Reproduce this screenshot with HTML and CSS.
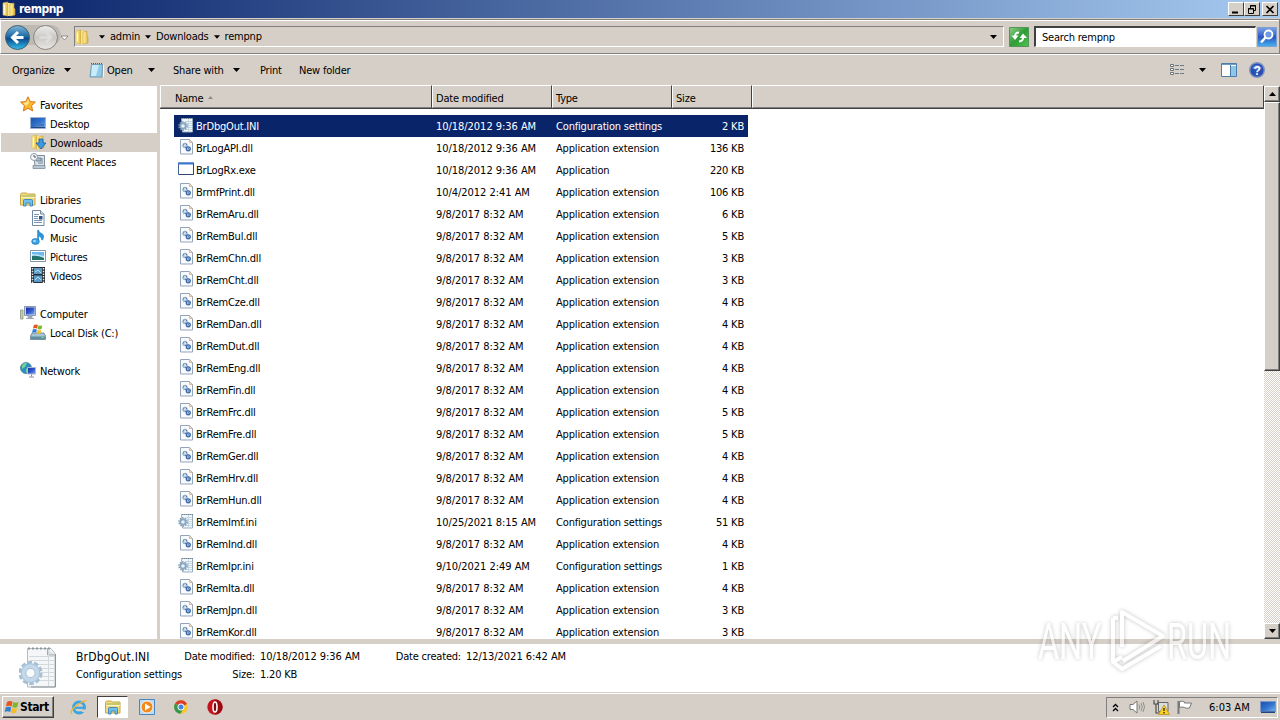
FILE: index.html
```html
<!DOCTYPE html>
<html lang="en">
<head>
  <meta charset="UTF-8">
  <title>rempnp</title>
  <link rel="stylesheet" href="styles.css">
</head>
<body>

  <!-- Shared icons -->
  <svg class="defs" width="0" height="0">
    <defs>
      <linearGradient id="g-folder" x1="0" x2="1"><stop offset="0" stop-color="#fff3ae"/><stop offset=".5" stop-color="#f3d873"/><stop offset="1" stop-color="#d9ae3c"/></linearGradient>
      <linearGradient id="g-screen" x1="0" y1="0" x2="1" y2="1"><stop offset="0" stop-color="#1a2a9c"/><stop offset=".5" stop-color="#2f55d0"/><stop offset="1" stop-color="#7aa5ee"/></linearGradient>
      <linearGradient id="g-desk" x1="0" y1="0" x2="1" y2="1"><stop offset="0" stop-color="#1d4fa8"/><stop offset=".5" stop-color="#2f72cc"/><stop offset="1" stop-color="#76b2ea"/></linearGradient>
      <linearGradient id="g-blue" x1="0" y1="0" x2="0" y2="1"><stop offset="0" stop-color="#7fb6d8"/><stop offset=".45" stop-color="#1d6ca8"/><stop offset=".55" stop-color="#0a4c8c"/><stop offset="1" stop-color="#35c0ee"/></linearGradient>
      <linearGradient id="g-grey" x1="0" y1="0" x2="0" y2="1"><stop offset="0" stop-color="#eeeeec"/><stop offset=".5" stop-color="#c9c8c4"/><stop offset="1" stop-color="#e9e8e5"/></linearGradient>
      <linearGradient id="g-green" x1="0" y1="0" x2="1" y2="1"><stop offset="0" stop-color="#8fd08a"/><stop offset=".5" stop-color="#2f9c35"/><stop offset="1" stop-color="#4fc64c"/></linearGradient>
      <linearGradient id="g-search" x1="0" y1="0" x2="0" y2="1"><stop offset="0" stop-color="#7fa3e6"/><stop offset=".5" stop-color="#2a56c4"/><stop offset="1" stop-color="#45b4ee"/></linearGradient>
      <symbol id="folder" viewBox="0 0 16 16">
        <path d="M2 2l5-1v14l-5-1z" fill="url(#g-folder)" stroke="#d8b850" stroke-width=".6"/>
        <path d="M7 2h4v13H7z" fill="#f8e48e"/>
        <path d="M9 3l4-1v5l1 1v6l-5 1z" fill="url(#g-folder)" stroke="#c9a33a" stroke-width=".6"/>
        <path d="M3.500 4v8" stroke="#fffbe0"/>
      </symbol>
      <symbol id="libs" viewBox="0 0 16 16">
        <path d="M.5 3.500l1-1.500h5l1 1h7.500v11H.5z" fill="#f3dc7c" stroke="#c8a647"/>
        <path d="M1.500 5h13" stroke="#8fb864"/>
        <path d="M1 6.500h14" stroke="#fff3b8"/>
        <path d="M3.500 15V9.500q0-1 1-1h7q1 0 1 1V15H10v-3H6v3z" fill="#6fc1ec" stroke="#3582bb" stroke-width=".9"/>
      </symbol>
      <symbol id="dll" viewBox="0 0 16 16">
        <path d="M2.500 .5h9l3 3v11.500h-12z" fill="#f8fafd" stroke="#94a5ba"/>
        <path d="M11.500.5v3h3z" fill="#ecdcc8" stroke="#c4ac8c" stroke-width=".7"/>
        <circle cx="7" cy="6.500" r="2" fill="#cfe2f6" stroke="#54779f" stroke-width="1.300" stroke-dasharray="1.100 .5"/>
        <circle cx="10.300" cy="9.800" r="2" fill="#a9cbee" stroke="#3d69a5" stroke-width="1.300"/>
        <circle cx="10.300" cy="9.800" r=".6" fill="#315c98"/>
      </symbol>
      <symbol id="ini" viewBox="0 0 16 16">
        <path d="M3.500 1.500H14.500v13.500H4.500z" fill="#f4f8fb" stroke="#9aacbc"/>
        <path d="M4 1.500h11" stroke="#6f8291" stroke-dasharray="1 1"/>
        <path d="M7 4.500h7M8 6.500h6M9 8.500h5M9 10.500h5M7 12.500h7M10.500 2v13" stroke="#b9cfdf" stroke-width=".8"/>
        <circle cx="5" cy="9" r="4" fill="none" stroke="#7c98b0" stroke-width="1.500" stroke-dasharray="1.500 1"/>
        <circle cx="5" cy="9" r="2.600" fill="#e8f2f8" stroke="#86a6c2" stroke-width="1.600"/>
      </symbol>
      <symbol id="exe" viewBox="0 0 16 16">
        <path d="M.5 2h15v11.500H.5z" fill="#fff" stroke="#426392"/>
        <path d="M0 2.500h16" stroke="#3a78cf" stroke-width="2"/>
        <path d="M1 13.500h14.500v-11" stroke="#2d4470" fill="none"/>
      </symbol>
      <symbol id="flag" viewBox="0 0 16 16">
        <path d="M3 3q3-2 5.500-.3L7.500 7.500Q5 6 2 7.500z" fill="#e8561f"/>
        <path d="M9.300 3q2.500 1.500 5.200 0L13.300 8q-2.500 1.300-5 0z" fill="#7cb82c"/>
        <path d="M1.700 8.600q3-1.500 5.500 0L6.200 13Q3.500 11.700.7 13z" fill="#2f7fd2"/>
        <path d="M8 9q2.500 1.500 5.100 0L12 13.600q-2.500 1.500-5 0z" fill="#f7bd22"/>
      </symbol>
      <symbol id="down" viewBox="0 0 7 4"><path d="M0 0h7L3.500 4z"/></symbol>
    </defs>
  </svg>

  <div class="titlebar">
    <svg class="i16"><use href="#folder"/></svg>
    <span class="title">rempnp</span>
    <div class="win-btn"><svg width="10" height="9"><path d="M1 7.500h6" stroke="#000" stroke-width="2"/></svg></div>
    <div class="win-btn"><svg width="10" height="9"><path d="M3.500 3V.5h5v5H7M3 1h6M1.500 3.500h5v5h-5zM1 4h6" fill="none" stroke="#000"/></svg></div>
    <div class="win-btn close"><svg width="10" height="9"><path d="M1.500 1l7 7M8.500 1l-7 7" stroke="#000" stroke-width="1.700"/></svg></div>
  </div>

  <div class="navbar">
    <svg class="travel" width="66" height="28">
      <path d="M13 2h34q8 1 9 10-1 9-9 10H13z" fill="#bdbab4"/>
      <circle cx="12.500" cy="14.500" r="12" fill="url(#g-blue)" stroke="#47606f"/>
      <path d="M18.500 14.500H8.500M13 9l-5.500 5.500L13 20" fill="none" stroke="#fff" stroke-width="3"/>
      <circle cx="40.500" cy="14.500" r="12" fill="url(#g-grey)" stroke="#858583"/>
      <path d="M34.500 14.500h10M41 9.500l5 5-5 5" fill="none" stroke="#dedddb" stroke-width="2.500"/>
      <path d="M56 13h7l-3.500 4z" fill="#fff" stroke="#777" stroke-width=".8"/>
    </svg>
    <div class="address">
      <svg class="i16"><use href="#folder"/></svg>
      <svg class="crumb"><use href="#down"/></svg><span>admin</span>
      <svg class="crumb"><use href="#down"/></svg><span>Downloads</span>
      <svg class="crumb"><use href="#down"/></svg><span>rempnp</span>
      <svg class="arr history"><use href="#down"/></svg>
    </div>
    <svg class="refresh" width="20" height="20">
      <path d="M.5.5h19v19H.5z" fill="url(#g-green)" stroke="#52945a"/>
      <path d="M10 5.500q-4 0-3.800 3.500M14 8v3q0 3-4 3.500" fill="none" stroke="#fff" stroke-width="2"/>
      <path d="M2.500 8.500h7L6 13zM10.500 11H18l-4-4.500z" fill="#fff"/>
    </svg>
    <div class="search">Search rempnp</div>
    <svg class="go" width="20" height="20">
      <path d="M.5.5h19v19H.5z" fill="url(#g-search)" stroke="#7e9fd0"/>
      <circle cx="11.500" cy="7.500" r="4" fill="#6c98e6" stroke="#fff" stroke-width="1.800"/>
      <path d="M8.500 10.500L4 15.500" stroke="#fff" stroke-width="2.500"/>
    </svg>
  </div>

  <div class="toolbar">
    <span class="t-organize">Organize</span><svg class="arr"><use href="#down"/></svg>
    <svg class="note" width="16" height="16">
      <path d="M2.500 2.500h11l-.5 12.500H1z" fill="#8fcbe8" stroke="#6e9cb5"/>
      <path d="M3 3h7L7 14H2z" fill="#c8ecf8"/>
      <path d="M2 1.500h12" stroke="#49606d" stroke-dasharray="1 1"/>
      <path d="M14.500 3v12" stroke="#f5f5ef"/>
    </svg>
    <span class="t-open">Open</span><svg class="arr"><use href="#down"/></svg>
    <span class="t-share">Share with</span><svg class="arr"><use href="#down"/></svg>
    <span class="t-print">Print</span>
    <span class="t-new">New folder</span>
    <svg class="views" width="16" height="12">
      <path d="M.5.5h3v2h-3zM.5 4.500h3v2h-3zM.5 8.500h3v2h-3z" fill="#fff" stroke="#69747d"/>
      <path d="M5 1.500h10M5 5.500h10M5 9.500h10" stroke="#6c7b88" stroke-dasharray="4 1"/>
    </svg>
    <svg class="arr"><use href="#down"/></svg>
    <svg class="pane" width="16" height="14">
      <path d="M.5.500h15v13H.5z" fill="#fff" stroke="#4c7da8"/>
      <path d="M1 1.500h14" stroke="#6e9ec5"/>
      <path d="M10 3h5v10h-5z" fill="#8fc6ea"/><path d="M9.500 2v11" stroke="#4c7da8"/>
    </svg>
    <svg class="help" width="16" height="16">
      <circle cx="8" cy="8" r="7.300" fill="#2850b4" stroke="#8293bb" stroke-width="1.400"/>
      <path d="M3 6q5-6 10 0-5 3-10 0z" fill="#6488d8"/>
      <text x="8" y="12.500" text-anchor="middle">?</text>
    </svg>
  </div>

  <div class="content">
    <div class="sidebar">
      <div class="node root">
        <svg class="i16"><path d="M8 .8l2.200 4.700 5.200.6-3.800 3.600 1 5.200L8 12.300l-4.600 2.600 1-5.200L.6 6.100l5.200-.6z" fill="#fcb62d" stroke="#d9771c"/><path d="M8 3l1.300 3.500L6 10 3 7l3.500-.7z" fill="#ffe58c"/></svg>
        <span>Favorites</span>
      </div>
      <div class="node">
        <svg class="i16"><path d="M.5 2.500h15v11H.5z" fill="url(#g-desk)" stroke="#9cb1d5"/><path d="M1 12.500h14" stroke="#27477c"/><path d="M8 9h6v2H8z" fill="#4a72b2"/></svg>
        <span>Desktop</span>
      </div>
      <div class="node active">
        <svg class="i16"><use href="#folder"/><path d="M9 5h4v4h3l-5 6-5-6h3z" fill="#3d9ae0" stroke="#1a5da5" stroke-width=".8"/></svg>
        <span>Downloads</span>
      </div>
      <div class="node">
        <svg class="i16"><path d="M4 2.500h10.500v11H5z" fill="#dbe4eb" stroke="#7e8c99"/><path d="M6 5h5v3H6zM8 10h5M12 5v4" fill="#a8bccb" stroke="#718696"/><path d="M3 12.500h12v3H3z" fill="#b9c7d2" stroke="#7e8c99" stroke-width=".8"/><circle cx="4" cy="4" r="3.500" fill="#f4f8fa" stroke="#8d9daa"/><path d="M4 2v2h2" fill="none" stroke="#556"/></svg>
        <span>Recent Places</span>
      </div>

      <div class="node root group">
        <svg class="i16"><use href="#libs"/></svg>
        <span>Libraries</span>
      </div>
      <div class="node">
        <svg class="i16"><path d="M2.500.5h8l3.500 3.500v11.500H2.500z" fill="#fff" stroke="#7089a5"/><path d="M10.500.5V4H14" fill="#d6e3f0" stroke="#7089a5"/><path d="M4 4.500h5M4 6.500h4M4 8.500h4M4 10.500h8M4 12.500h8" stroke="#7895b4"/><path d="M9 6h3.500v3.500H9z" fill="#31588a"/></svg>
        <span>Documents</span>
      </div>
      <div class="node">
        <svg class="i16"><path d="M8 12.500V1q.5 3 3.500 4 3 2 .5 6 .5-3-3-4.500" fill="#2e93d8" stroke="#2e93d8" stroke-width="1.600"/><ellipse cx="5.500" cy="12.500" rx="3.800" ry="2.900" fill="#3ca5e6" stroke="#1e70b6" stroke-width=".7"/><ellipse cx="4.500" cy="12" rx="1.500" ry="1" fill="#aee1fa"/></svg>
        <span>Music</span>
      </div>
      <div class="node">
        <svg class="i16"><path d="M.5 2.500h15v11H.5z" fill="#fff" stroke="#8195ab"/><path d="M2 4h12v8H2z" fill="#6bbaf0"/><path d="M2 6q6 0 12 2v4H2z" fill="#b9e3f4"/><path d="M2 8q5-1 12 2v2H2z" fill="#23746a"/></svg>
        <span>Pictures</span>
      </div>
      <div class="node">
        <svg class="i16"><path d="M1 0h14v16H1z" fill="#292c30"/><path d="M2.500 1v15M13.500 1v15" stroke="#e5e8ea" stroke-width="1.500" stroke-dasharray="1.500 1.200"/><path d="M4 1h8v6H4zM4 8.500h8V15H4z" fill="#5b9ccb"/><path d="M5 5l3-2 3 3M5 13l3-3 3 3" stroke="#b8e0f2" fill="none"/></svg>
        <span>Videos</span>
      </div>

      <div class="node root group">
        <svg class="i16"><path d="M.5 5h2.500v9H.5z" fill="#c6d0a9" stroke="#8a9681" stroke-width=".8"/><path d="M4.500 1.500h11v9h-11z" fill="#cfd5e2" stroke="#8996b2"/><path d="M6 2.500h8.500v7H6z" fill="url(#g-screen)"/><path d="M8 11h4v1.500H8zM6 13.500h8" fill="#9aa7bd" stroke="#9aa7bd"/></svg>
        <span>Computer</span>
      </div>
      <div class="node">
        <svg class="i16"><path d="M2 9h12l1.500 3v3.500H.5V12z" fill="#a7c6d3" stroke="#63808e" stroke-width=".8"/><path d="M1 12.500h14v2.500H1z" fill="#5c8ea2"/><path d="M11.500 13.500h2" stroke="#8df05e"/><use href="#flag" x="1" y="-1" width="13" height="12"/></svg>
        <span>Local Disk (C:)</span>
      </div>

      <div class="node root group">
        <svg class="i16"><circle cx="6" cy="6" r="5.500" fill="#2b8fc0" stroke="#457f94" stroke-width=".8"/><path d="M2 3q3-3 5-2L5 5 2 7zM6 7l3-2v4l-3 2z" fill="#72d09c"/><path d="M7.500 5.500h8V12h-8z" fill="url(#g-screen)" stroke="#aab9d8"/><path d="M11.500 12.500v2M9 15h5" stroke="#7b8ead"/></svg>
        <span>Network</span>
      </div>
    </div>

    <div class="files">
      <div class="head">
        <div class="c-name">Name <svg width="5" height="3"><path d="M0 3h5L2.500 0z" fill="#8b8985"/></svg></div>
        <div class="c-date">Date modified</div>
        <div class="c-type">Type</div>
        <div class="c-size">Size</div>
        <div class="c-rest"></div>
      </div>
      <div class="rows">
        <div class="row selected"><svg class="fi"><use href="#ini"/></svg><span class="name">BrDbgOut.INI</span><span class="date">10/18/2012 9:36 AM</span><span class="type">Configuration settings</span><span class="size">2 KB</span></div>
        <div class="row"><svg class="fi"><use href="#dll"/></svg><span class="name">BrLogAPI.dll</span><span class="date">10/18/2012 9:36 AM</span><span class="type">Application extension</span><span class="size">136 KB</span></div>
        <div class="row"><svg class="fi"><use href="#exe"/></svg><span class="name">BrLogRx.exe</span><span class="date">10/18/2012 9:36 AM</span><span class="type">Application</span><span class="size">220 KB</span></div>
        <div class="row"><svg class="fi"><use href="#dll"/></svg><span class="name">BrmfPrint.dll</span><span class="date">10/4/2012 2:41 AM</span><span class="type">Application extension</span><span class="size">106 KB</span></div>
        <div class="row"><svg class="fi"><use href="#dll"/></svg><span class="name">BrRemAru.dll</span><span class="date">9/8/2017 8:32 AM</span><span class="type">Application extension</span><span class="size">6 KB</span></div>
        <div class="row"><svg class="fi"><use href="#dll"/></svg><span class="name">BrRemBul.dll</span><span class="date">9/8/2017 8:32 AM</span><span class="type">Application extension</span><span class="size">5 KB</span></div>
        <div class="row"><svg class="fi"><use href="#dll"/></svg><span class="name">BrRemChn.dll</span><span class="date">9/8/2017 8:32 AM</span><span class="type">Application extension</span><span class="size">3 KB</span></div>
        <div class="row"><svg class="fi"><use href="#dll"/></svg><span class="name">BrRemCht.dll</span><span class="date">9/8/2017 8:32 AM</span><span class="type">Application extension</span><span class="size">3 KB</span></div>
        <div class="row"><svg class="fi"><use href="#dll"/></svg><span class="name">BrRemCze.dll</span><span class="date">9/8/2017 8:32 AM</span><span class="type">Application extension</span><span class="size">4 KB</span></div>
        <div class="row"><svg class="fi"><use href="#dll"/></svg><span class="name">BrRemDan.dll</span><span class="date">9/8/2017 8:32 AM</span><span class="type">Application extension</span><span class="size">4 KB</span></div>
        <div class="row"><svg class="fi"><use href="#dll"/></svg><span class="name">BrRemDut.dll</span><span class="date">9/8/2017 8:32 AM</span><span class="type">Application extension</span><span class="size">4 KB</span></div>
        <div class="row"><svg class="fi"><use href="#dll"/></svg><span class="name">BrRemEng.dll</span><span class="date">9/8/2017 8:32 AM</span><span class="type">Application extension</span><span class="size">4 KB</span></div>
        <div class="row"><svg class="fi"><use href="#dll"/></svg><span class="name">BrRemFin.dll</span><span class="date">9/8/2017 8:32 AM</span><span class="type">Application extension</span><span class="size">4 KB</span></div>
        <div class="row"><svg class="fi"><use href="#dll"/></svg><span class="name">BrRemFrc.dll</span><span class="date">9/8/2017 8:32 AM</span><span class="type">Application extension</span><span class="size">5 KB</span></div>
        <div class="row"><svg class="fi"><use href="#dll"/></svg><span class="name">BrRemFre.dll</span><span class="date">9/8/2017 8:32 AM</span><span class="type">Application extension</span><span class="size">5 KB</span></div>
        <div class="row"><svg class="fi"><use href="#dll"/></svg><span class="name">BrRemGer.dll</span><span class="date">9/8/2017 8:32 AM</span><span class="type">Application extension</span><span class="size">4 KB</span></div>
        <div class="row"><svg class="fi"><use href="#dll"/></svg><span class="name">BrRemHrv.dll</span><span class="date">9/8/2017 8:32 AM</span><span class="type">Application extension</span><span class="size">4 KB</span></div>
        <div class="row"><svg class="fi"><use href="#dll"/></svg><span class="name">BrRemHun.dll</span><span class="date">9/8/2017 8:32 AM</span><span class="type">Application extension</span><span class="size">4 KB</span></div>
        <div class="row"><svg class="fi"><use href="#ini"/></svg><span class="name">BrRemImf.ini</span><span class="date">10/25/2021 8:15 AM</span><span class="type">Configuration settings</span><span class="size">51 KB</span></div>
        <div class="row"><svg class="fi"><use href="#dll"/></svg><span class="name">BrRemInd.dll</span><span class="date">9/8/2017 8:32 AM</span><span class="type">Application extension</span><span class="size">4 KB</span></div>
        <div class="row"><svg class="fi"><use href="#ini"/></svg><span class="name">BrRemIpr.ini</span><span class="date">9/10/2021 2:49 AM</span><span class="type">Configuration settings</span><span class="size">1 KB</span></div>
        <div class="row"><svg class="fi"><use href="#dll"/></svg><span class="name">BrRemIta.dll</span><span class="date">9/8/2017 8:32 AM</span><span class="type">Application extension</span><span class="size">4 KB</span></div>
        <div class="row"><svg class="fi"><use href="#dll"/></svg><span class="name">BrRemJpn.dll</span><span class="date">9/8/2017 8:32 AM</span><span class="type">Application extension</span><span class="size">3 KB</span></div>
        <div class="row"><svg class="fi"><use href="#dll"/></svg><span class="name">BrRemKor.dll</span><span class="date">9/8/2017 8:32 AM</span><span class="type">Application extension</span><span class="size">3 KB</span></div>
      </div>
    </div>

    <div class="scrollbar">
      <div class="sb-btn"><svg width="7" height="4"><path d="M0 4h7L3.500 0z"/></svg></div>
      <div class="thumb"></div>
      <div class="track"></div>
      <div class="sb-btn"><svg width="7" height="4"><path d="M0 0h7L3.500 4z"/></svg></div>
    </div>
  </div>

  <div class="details">
    <svg class="big-icon" width="40" height="44">
      <path d="M8.500 2.500H32l4 5V41H8.500z" fill="#f4f6f7" stroke="#b5bcc1"/>
      <path d="M36.500 8v33H12" fill="none" stroke="#8f979d"/>
      <path d="M9 2.500h22" stroke="#8d969b" stroke-width="2" stroke-dasharray="2 2"/>
      <path d="M28.500 3v6h7.500" fill="#dde2e5" stroke="#a3abb0"/>
      <path d="M10 10.500h26M10 14.500h26M10 18.500h26M10 22.500h26M10 26.500h26M10 30.500h26M10 34.500h26M29.500 4v36" stroke="#d3dade"/>
      <circle cx="11.500" cy="27" r="10.500" fill="none" stroke="#a5bed2" stroke-width="3" stroke-dasharray="4.400 2.200"/>
      <circle cx="11.500" cy="27" r="7.300" fill="#f0f5f8" stroke="#c3d9ea" stroke-width="5"/>
      <circle cx="11.500" cy="27" r="9.300" fill="none" stroke="#9db8d0" stroke-width=".7"/>
      <circle cx="11.500" cy="27" r="4.600" fill="#f8fbfc" stroke="#94b0c8" stroke-width=".8"/>
    </svg>
    <div class="info who"><span class="file">BrDbgOut.INI</span><span class="type">Configuration settings</span></div>
    <div class="info keys"><span>Date modified:</span><span>Size:</span></div>
    <div class="info vals"><span class="date">10/18/2012 9:36 AM</span><span>1.20 KB</span></div>
    <div class="info keys2"><span>Date created:</span></div>
    <div class="info vals"><span class="date">12/13/2021 6:42 AM</span></div>
  </div>

  <div class="taskbar">
    <div class="start"><svg width="16" height="16"><use href="#flag"/></svg><span>Start</span></div>
    <svg class="app ie" width="18" height="18"><circle cx="9" cy="9.500" r="5.500" fill="none" stroke="#3aa5e2" stroke-width="2.800"/><path d="M10 11.500h7v2.500h-5z" fill="#d5cfc7"/><path d="M4 9.800h11.500" stroke="#3aa5e2" stroke-width="2.200"/><path d="M2 16q-3-3 4.500-8.500T16.500 3" fill="none" stroke="#f0b52e" stroke-width="1.400"/></svg>
    <div class="task-active"><svg class="i16"><use href="#libs"/></svg></div>
    <svg class="app wmp" width="16" height="16"><path d="M.5.5h15v15H.5z" fill="#bcdcf4" stroke="#4b87bd"/><circle cx="8" cy="8" r="6" fill="#f58a1c" stroke="#fff" stroke-width=".8"/><path d="M6 4.500L11.500 8 6 11.500z" fill="#fff"/></svg>
    <svg class="app chrome" width="14" height="14"><circle cx="7" cy="7" r="6.800" fill="#f6c928"/><path d="M7 7L1 3.600A6.800 6.800 0 0 1 13 4z" fill="#db3d2f"/><path d="M7 7L1 3.600A6.800 6.800 0 0 0 6.500 13.800L9.500 8.500z" fill="#38974d"/><circle cx="7" cy="7" r="3.100" fill="#4285e4" stroke="#fff"/></svg>
    <svg class="app opera" width="16" height="16"><circle cx="8" cy="8" r="7.700" fill="#c4131c"/><path d="M8 .5A7.500 7.500 0 0 1 8 15.500z" fill="#980b13"/><ellipse cx="8" cy="8" rx="2" ry="5" fill="#7f0c12" stroke="#fff" stroke-width="1.600"/></svg>
    <div class="tray">
      <svg width="7" height="9"><path d="M1 4l2.500-2.500L6 4M1 8l2.500-2.500L6 8" fill="none" stroke="#000" stroke-width="1.300"/></svg>
      <svg class="sound" width="16" height="14"><path d="M1 4.500h3l4-3.500v12L4 9.500H1z" fill="#fff" stroke="#777"/><path d="M10 4.500q1.500 2.500 0 5M12 3q2.500 4 0 8M14 2q3 5 0 10" fill="none" stroke="#888" stroke-width=".9"/></svg>
      <svg class="net" width="17" height="16"><path d="M5.500 3.500h9.500v9H5.500z" fill="#d9dde0" stroke="#666"/><path d="M1 1v4h4V1M3 5v9h4" fill="none" stroke="#444" stroke-width="1.100"/><path d="M11 6l5.500 9.500H5.500z" fill="#fbd323" stroke="#b58b10" stroke-width=".7"/><path d="M11 9v3M11 13v1.500" stroke="#222" stroke-width="1.300"/></svg>
      <svg class="action" width="17" height="15"><path d="M1.500 1v13" stroke="#777" stroke-width="2"/><path d="M2.500 1.500q3-1 5 .5v1h7l-2 5q-3 .8-5-.5-2-1-5 0z" fill="#fff" stroke="#777"/></svg>
      <span class="clock">6:03 AM</span>
      <svg class="i16"><path d="M.5 2.500h15v10H.5z" fill="url(#g-desk)" stroke="#7a98c8"/><path d="M1 12.500h14v1.500H1z" fill="#1f447e"/></svg>
    </div>
  </div>

  <svg class="watermark" width="220" height="80">
    <text x="8" y="58" textLength="63" lengthAdjust="spacingAndGlyphs">ANY</text>
    <text x="137" y="58" textLength="64" lengthAdjust="spacingAndGlyphs">RUN</text>
    <path d="M92 46V11l41 24-40 25M83 17v44l9-5M88 17h-5M83 61l9 7 39-23"/>
  </svg>

</body>
</html>
```
FILE: styles.css
```css
:root {
  --face: #d5cfc7;
  --shadow: #808080;
  --dark: #404040;
  --select: #0a246a;
}
* {
  box-sizing: border-box;
}
body {
  margin: 0;
  width: 1280px;
  height: 720px;
  overflow: hidden;
  position: relative;
  display: flex;
  flex-direction: column;
  background: var(--face);
  color: #000;
  font-family: 'DejaVu Sans Condensed', 'DejaVu Sans', sans-serif;
  font-stretch: condensed;
  font-size: 11px;
  letter-spacing: -0.2px;
  line-height: 14px;
  white-space: nowrap;
}
svg {
  display: block;
  flex: none;
}
.defs {
  position: absolute;
}
.i16 {
  width: 16px;
  height: 16px;
}
.arr {
  width: 7px;
  height: 4px;
}

/* title bar */
.titlebar {
  height: 18px;
  flex: none;
  display: flex;
  align-items: center;
  padding: 0 2px 0 1px;
  background: linear-gradient(90deg, #0a246a, #a6caf0);
}
.title {
  flex: 1;
  margin-left: 2px;
  color: #fff;
  font-size: 12px;
  font-weight: bold;
  letter-spacing: -0.5px;
}
.win-btn {
  width: 16px;
  height: 14px;
  padding: 2px 0 0 2px;
  background: var(--face);
  border: 1px solid;
  border-color: #fff var(--dark) var(--dark) #fff;
}
.close {
  margin-left: 2px;
}

/* address bar */
.navbar {
  height: 35px;
  flex: none;
  display: flex;
  align-items: center;
  margin-top: 1px;
  padding: 0 0 0 4px;
  border: 1px solid var(--shadow);
  border-left-color: #fff;
  box-shadow: inset 0 1px #fff, 0 1px #fff;
}
.address {
  height: 21px;
  width: 930px;
  display: flex;
  align-items: center;
  margin-left: 3px;
  border: 1px solid;
  border-color: var(--shadow) #fff #fff var(--shadow);
}
.crumb {
  width: 6px;
  height: 4px;
  margin: 0 5px 0 5px;
}
.address .i16 {
  margin-left: -1px;
}
.address .i16 + .crumb {
  margin-left: 9px;
}
.address .history {
  margin-left: auto;
  margin-right: 6px;
}
.refresh {
  margin-left: 5px;
}
.search {
  width: 222px;
  height: 21px;
  margin: 0 1px 0 5px;
  padding: 3px 0 0 6px;
  background: #fff;
  border: 1px solid #fff;
  border-top: 2px solid var(--dark);
  border-left: 2px solid var(--dark);
}

/* command bar */
.toolbar {
  height: 30px;
  flex: none;
  display: flex;
  align-items: center;
  margin-top: 1px;
  padding-left: 12px;
}
.toolbar span {
  padding-top: 1px;
}
.t-organize {
  width: 52px;
}
.note {
  margin: 0 2px 0 18px;
}
.t-open {
  width: 41px;
}
.t-share {
  width: 60px;
  margin-left: 18px;
}
.t-print {
  width: 39px;
  margin-left: 20px;
}
.t-new {
  flex: 1;
}
.views {
  margin-right: 13px;
}
.pane {
  margin: 0 12px 0 15px;
}
.help {
  margin-right: 15px;
}
.help text {
  font: bold 12px 'Liberation Sans', sans-serif;
  fill: #fff;
}

/* content */
.content {
  height: 554px;
  flex: none;
  display: flex;
}
.sidebar {
  width: 157px;
  margin: 1px 3px 0 0;
  padding: 9px 0 0 1px;
  background: #fff;
}
.node {
  height: 19px;
  display: flex;
  align-items: center;
  padding-left: 29px;
}
.node .i16 {
  margin-top: -1px;
}
.node span {
  margin-left: 4px;
  padding-top: 2px;
}
.root {
  padding-left: 19px;
}
.group {
  margin-top: 19px;
}
.active {
  background: var(--face);
}
.files {
  width: 1104px;
  overflow: hidden;
  background: #fff;
}
.head {
  height: 24px;
  display: flex;
  border-bottom: 1px solid var(--dark);
  background: var(--face);
}
.head div {
  display: flex;
  align-items: center;
  padding: 4px 0 0 3px;
  border-top: 1px solid #fff;
  border-left: 1px solid #fff;
  border-right: 1px solid var(--dark);
  border-bottom: 1px solid var(--shadow);
}
.head .c-name {
  width: 272px;
  padding-left: 14px;
}
.c-name svg {
  margin: -3px 0 0 5px;
}
.c-date,
.c-type {
  width: 120px;
}
.c-size {
  width: 80px;
}
.c-rest {
  flex: 1;
}
.rows {
  padding: 6px 0 0 14px;
}
.row {
  width: 574px;
  height: 22px;
  display: flex;
  align-items: center;
}
.row span {
  padding-top: 1px;
}
.selected {
  background: var(--select);
  color: #fff;
}
.fi {
  width: 16px;
  height: 16px;
  margin: -2px 2px 0 4px;
}
.row .name {
  width: 240px;
}
.row .date {
  width: 120px;
}
.date {
  letter-spacing: -0.04px;
}
.type {
  letter-spacing: -0.17px;
}
.row .type {
  width: 120px;
}
.size {
  flex: 1;
  padding-right: 4px;
  text-align: right;
}

/* scrollbar */
.scrollbar {
  width: 16px;
  margin-top: 1px;
  display: flex;
  flex-direction: column;
}
.sb-btn,
.thumb {
  background: var(--face);
  border: 1px solid;
  border-color: #fff var(--dark) var(--dark) #fff;
  box-shadow: inset -1px -1px var(--shadow);
}
.sb-btn {
  height: 16px;
  display: flex;
  align-items: center;
  justify-content: center;
}
.thumb {
  height: 269px;
}
.track {
  flex: 1;
  background: repeating-conic-gradient(#fff 0 25%, var(--face) 0 50%) 0 0 / 2px 2px;
}

/* details pane */
.details {
  height: 48px;
  flex: none;
  display: flex;
  margin-top: 5px;
  padding: 2px 0 0 19px;
  background: #fff;
}
.info {
  display: flex;
  flex-direction: column;
  gap: 4px;
  padding-top: 4px;
}
.who {
  width: 106px;
  margin-left: 17px;
}
.who .file {
  font-size: 12px;
  letter-spacing: 0.2px;
}
.keys {
  width: 73px;
  align-items: flex-end;
}
.vals {
  width: 100px;
  margin-left: 5px;
}
.keys2 {
  width: 65px;
  margin-left: 36px;
  align-items: flex-end;
}

/* taskbar */
.taskbar {
  flex: 1;
  display: flex;
  align-items: center;
  margin-top: 1px;
  padding: 0 2px;
  border-top: 1px solid #fff;
}
.start {
  width: 52px;
  height: 22px;
  display: flex;
  align-items: center;
  padding-left: 1px;
  border: 1px solid;
  border-color: #fff var(--dark) var(--dark) #fff;
  box-shadow: inset -1px -1px var(--shadow);
  font-size: 12px;
  font-weight: bold;
  letter-spacing: -0.4px;
}
.ie {
  margin: 0 9px 0 16px;
}
.task-active {
  width: 31px;
  height: 22px;
  display: flex;
  align-items: center;
  justify-content: center;
  background: #fff;
  border: 1px solid;
  border-color: var(--dark) #fff #fff var(--dark);
}
.wmp {
  margin: 0 19px 0 11px;
}
.opera {
  margin-left: 19px;
}
.tray {
  width: 172px;
  height: 21px;
  display: flex;
  align-items: center;
  margin-left: auto;
  padding-left: 5px;
  border: 1px solid;
  border-color: var(--shadow) #fff #fff var(--shadow);
}
.sound {
  margin: 0 8px 0 10px;
}
.action {
  margin-left: 7px;
}
.clock {
  width: 41px;
  margin: 0 10px 0 15px;
  padding-top: 1px;
  letter-spacing: 0;
}

.watermark {
  position: absolute;
  left: 1030px;
  top: 601px;
  opacity: 0.6;
  filter: drop-shadow(0 0 2px rgba(0, 0, 0, 0.4));
}
.watermark text {
  font: 50px Roboto, sans-serif;
  fill: #fff;
}
.watermark path {
  fill: none;
  stroke: #fff;
  stroke-width: 4;
  stroke-linejoin: round;
}
```
